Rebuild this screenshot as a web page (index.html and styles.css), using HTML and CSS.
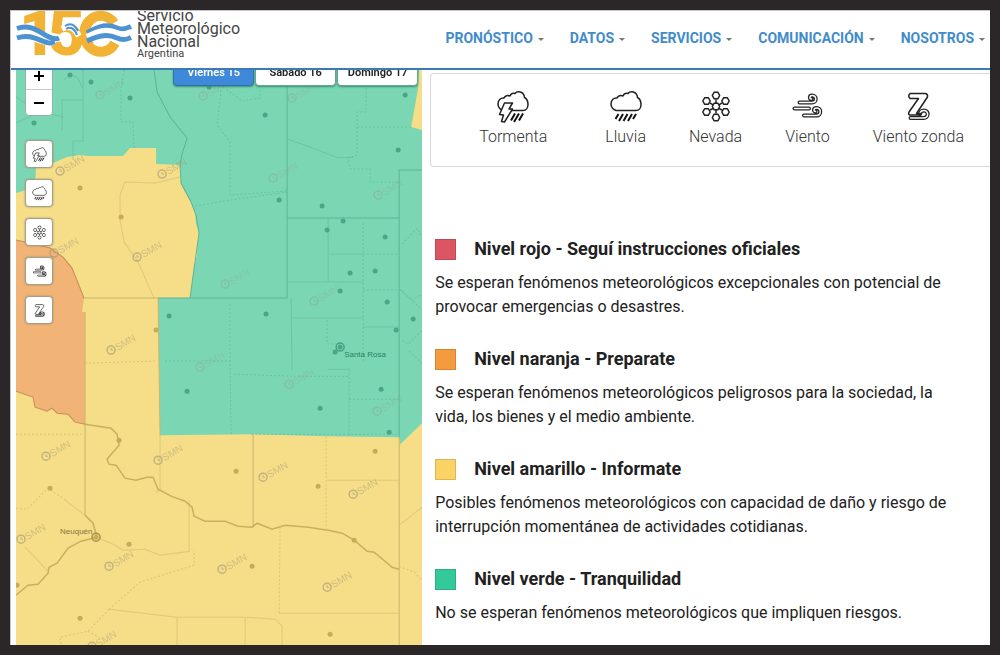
FILE: index.html
```html
<!DOCTYPE html>
<html lang="es">
<head>
<meta charset="utf-8">
<title>Servicio Meteorológico Nacional - Alertas</title>
<link rel="stylesheet" href="styles.css">
</head>
<body>
<svg class="defs" aria-hidden="true">
  <defs>
    <symbol id="storm" viewBox="0 0 32 33">
      <path class="ln" d="M6 20.500C2 19 1 16.500 1 14 1 10 4 7.500 7 8 8 5.500 11 5 13 6 14 3.500 16 3 18 3.500 20 .5 27 1 27.500 7.500 30 9 31 12 31 14.500 31 18 29 20.500 26 20.500Z"/>
      <path class="ln solid" d="M7.500 13H15.500L12 19H15.500L7.500 32 4.500 31.500 6.500 25 2.500 24.500Z"/>
      <path class="rain" d="M18 23.500L14 30.500M22 23.500L17 32M26 23.500L22 30.500"/>
    </symbol>
    <symbol id="rain" viewBox="0 0 32 33">
      <path class="ln" d="M6 20.500C2 19 1 16.500 1 14 1 10 4 7.500 7 8 8 5.500 11 5 13 6 14 3.500 16 3 18 3.500 20 .5 27 1 27.500 7.500 30 9 31 12 31 14.500 31 18 29 20.500 26 20.500Z"/>
      <path class="rain" d="M8.500 24L5.500 29M13 24L9 31M17.500 24L13.500 31M22 24L18 31M26 24L23 29"/>
    </symbol>
    <symbol id="snow" viewBox="0 0 32 33">
      <path class="ln" d="M16 9.500V13M16 20V23.500M10 13L13 14.800M19 18.500L22 20M22 13L19 14.800M13 18.500L10 20"/>
      <g class="ln">
        <path id="hex" d="M14.200 13.200H17.800L19.700 16.500 17.800 19.800H14.200L12.300 16.500Z"/>
        <use href="#hex" y="-11"/><use href="#hex" y="11"/>
        <use href="#hex" x="-9.500" y="-5.500"/><use href="#hex" x="9.500" y="-5.500"/>
        <use href="#hex" x="-9.500" y="5.500"/><use href="#hex" x="9.500" y="5.500"/>
      </g>
    </symbol>
    <symbol id="wind" viewBox="0 0 32 33">
      <path class="tube" d="M8.500 12.500H21C26 12.500 26 5.500 21 5.500 18.500 5.500 18 8.500 20.500 9"/>
      <path class="core" d="M8.500 12.500H21C26 12.500 26 5.500 21 5.500 18.500 5.500 18 8.500 20.500 9"/>
      <path class="tube" d="M3.500 18.500H18"/><path class="core" d="M3.500 18.500H18"/>
      <path class="tube" d="M13 25.500H25.500C30.500 25.500 30.500 18 25.500 18 22.500 18 22 21 24.500 21.500"/>
      <path class="core" d="M13 25.500H25.500C30.500 25.500 30.500 18 25.500 18 22.500 18 22 21 24.500 21.500"/>
    </symbol>
    <symbol id="zonda" viewBox="0 0 32 33">
      <path class="tube" d="M8.500 28H21.500C27 28 27 20.500 22 20.500 19.500 20.500 18 22 18 24"/>
      <path class="core" d="M8.500 28H21.500C27 28 27 20.500 22 20.500 19.500 20.500 18 22 18 24"/>
      <path class="ln solid" d="M8 3.500H23.500Q26 4 25.500 7L14.500 23.500H18.500V25H7.500Q6 24 7 22L16.500 8.500H8Q5.500 6 8 3.500Z"/>
    </symbol>
    <g id="smn">
      <circle r="4" fill="none" stroke="currentColor" stroke-width="1.500"/>
      <path d="M0-2V0H2" fill="none" stroke="currentColor"/>
      <text class="stamp" transform="rotate(-30)" x="5" y="4">SMN</text>
    </g>
    <circle id="dot" r="2.500"/>
  </defs>
</svg>
<div class="page">
  <header class="header">
    <a class="brand" href="#" aria-label="Servicio Meteorológico Nacional Argentina">
      <svg class="brand-mark" viewBox="0 0 116 50" aria-hidden="true">
        <text class="digits" x="3 32" y="44">15</text>
        <path class="ring" d="M98 12A16.500 18 0 1 0 99 32"/>
        <path d="M72 20Q90 12 101 16 110 20 116 14V31Q104 36 94 29 84 26 72 33Z" fill="#fff"/>
        <path class="ring" d="M74 9A16.500 18 0 0 0 74 35"/>
        <path d="M1 14C14 11 22 18 31 23 36 26 40 26 43 25L39 34C22 36 14 25 1 30Z" fill="#fff"/>
        <path class="wave" d="M1 17.500C14 13 22 20 31 25 36 28 40 28.500 43 27"/>
        <path class="wave" d="M1 27C14 22.500 22 29 31 31.500 34 32.500 36 32 39 31"/>
        <path class="foam" d="M46 18Q56 12 63 25"/>
        <path class="thin" d="M49 15Q57 10 62 20"/>
        <path class="thin" d="M50 18Q57 14 61 24"/>
        <path class="wave" d="M71 22C84 14 92 13 101 17 108 20 112 17 115 15.500"/>
        <path class="foam" d="M71 26C84 19 92 18 101 22 108 25 112 22 115 21"/>
        <path class="wave" d="M71 30C84 24 92 23 101 27 108 30 112 28 115 26.500"/>
      </svg>
      <span class="brand-name">Servicio<br>Meteorológico<br>Nacional<small>Argentina</small></span>
    </a>
    <nav class="nav">
      <a href="#">PRONÓSTICO</a>
      <a href="#">DATOS</a>
      <a href="#">SERVICIOS</a>
      <a href="#">COMUNICACIÓN</a>
      <a href="#">NOSOTROS</a>
    </nav>
  </header>
  <main class="main">
    <section class="map" aria-label="Mapa de alertas">
      <svg class="map-canvas" viewBox="16 70 406 575" preserveAspectRatio="xMinYMin slice">
        <rect x="16" y="70" width="406" height="575" fill="#f6dd87"/>
        <path fill="#7bd7b3" d="M16 70H419L418 88 411 127 422 130V423L400 444 399 437 327 436 253 434 160 435 158 298H190L192 283 194 267 197 255 197 247 199 233 196 224 195 213 190 200 184 190 181 183 180 165 156 164V148H130L123 156 87 156 80 155 67 157 53 163 36 166 35 188 26 190 16 193Z"/>
        <path fill="#f1b376" d="M16 240L30 243 50 248 63 257 72 268 82 292 84 298 82 312H85V424L75 422 68 414 57 413 52 408 47 411 35 407 33 397 16 391Z"/>
        <g class="green-lines">
          <path d="M287 70V298H158M287 218H399M399 437V170H422"/>
          <path d="M154 70L157 92 170 117 187 138 182 154 180 165 181 183 191 202 196 215 199 233 197 247 192 283 190 298"/>
          <path class="faint" d="M16 97L25 103M16 123L40 112 64 117M62 131V100H82M83 70V141H73V160M64 80Q76 68 82 88M287 139L318 150 338 158 354 157M291 298L292 370M328 218V282M288 282H363M329 254H363M292 318H363M363 327H399M328 369H349"/>
          <path class="dots" d="M124 70L121 90V122H133L134 150M221 90L217 125 230 142V195L287 191M195 206L230 200 287 192M223 87L242 101 260 98V83M366 88V112H357V155L348 158 350 169H370V182H399M357 127H411M363 223V327M363 254H399M363 290H400L412 300 422 294M402 244L417 228 422 238M230 304V364L231 434M165 361H230M234 374L290 376H349M349 369V436M349 399H399M327 320V344H340M363 327V363M401 290L422 310M402 340L408 344 422 330M409 351L422 363M251 434H399"/>
        </g>
        <g class="land-lines">
          <path d="M84 298H158L160 435M85 312V515M253 434V527M399 437V645"/>
          <path class="faint" d="M125 182L120 195 120 220 124 242 137 260 154 298M125 182L155 183 180 177M160 435V490L156 492M189 500V550M85 515L65 500M25 547L48 571M109 609L177 617H245L275 619 282 626V645M177 617V645M245 617V645M279 613H399M327 480H399M399 525L422 507"/>
          <path class="dots" d="M85 363L155 361M16 434H85M326 436V530M280 527L279 613M109 609L140 582 194 565 194 550M109 609L88 631 60 637 61 645M88 631L100 638M16 508L27 509 48 488 66 500M399 566L414 572 422 580"/>
          <path class="river" d="M85 424L111 428 117 434 119 445 107 459 109 464 116 465 125 478 136 480 147 477 153 477 158 489 171 496 185 501 192 507 194 516 205 521 225 521 238 526 252 527 257 523 272 529 285 525 308 527 328 530 342 533 354 540 367 551 374 552 392 567 399 569"/>
          <path class="river" d="M85 515L93 523 97 537 81 541 68 548 57 563 49 567 48 573 38 584 28 585 16 595"/>
          <path class="faint" d="M97 537L115 545 123 550 145 549 160 555 190 551"/>
        </g>
        <path class="fire-line" d="M16 391L33 397 35 407 47 411 52 408 57 413 68 414 75 422 85 424M16 240L30 243 50 248 63 257 72 268 84 298"/>
        <g class="green-dots">
          <use href="#dot" x="70" y="75"/><use href="#dot" x="91" y="82"/><use href="#dot" x="130" y="98"/><use href="#dot" x="34" y="123"/><use href="#dot" x="209" y="87"/><use href="#dot" x="265" y="115"/><use href="#dot" x="405" y="95"/><use href="#dot" x="398" y="150"/><use href="#dot" x="279" y="200"/><use href="#dot" x="322" y="206"/><use href="#dot" x="343" y="221"/><use href="#dot" x="327" y="230"/><use href="#dot" x="385" y="237"/><use href="#dot" x="350" y="273"/><use href="#dot" x="375" y="271"/><use href="#dot" x="340" y="291"/><use href="#dot" x="387" y="302"/><use href="#dot" x="413" y="319"/><use href="#dot" x="396" y="330"/><use href="#dot" x="266" y="314"/><use href="#dot" x="169" y="316"/><use href="#dot" x="187" y="391"/><use href="#dot" x="320" y="408"/><use href="#dot" x="381" y="389"/><use href="#dot" x="389" y="432"/><use href="#dot" x="335" y="352"/>
          <circle class="city" cx="340" cy="347" r="4"/><use href="#dot" x="340" y="347"/>
          <text class="place" x="344" y="357">Santa Rosa</text>
        </g>
        <g class="land-dots">
          <use href="#dot" x="80" y="188"/><use href="#dot" x="121" y="217"/><use href="#dot" x="156" y="330"/><use href="#dot" x="119" y="440"/><use href="#dot" x="50" y="488"/><use href="#dot" x="236" y="471"/><use href="#dot" x="318" y="486"/><use href="#dot" x="375" y="451"/><use href="#dot" x="129" y="544"/><use href="#dot" x="252" y="566"/><use href="#dot" x="354" y="540"/><use href="#dot" x="80" y="618"/><use href="#dot" x="330" y="634"/><use href="#dot" x="17" y="585"/>
          <circle class="city" cx="96" cy="537" r="4"/><use href="#dot" x="96" y="537"/>
          <text class="place" x="60" y="534">Neuquén</text>
        </g>
        <g class="stamps pale">
          <use href="#smn" x="100" y="95"/><use href="#smn" x="203" y="96"/><use href="#smn" x="292" y="98"/><use href="#smn" x="273" y="178"/><use href="#smn" x="378" y="195"/><use href="#smn" x="225" y="284"/><use href="#smn" x="314" y="301"/><use href="#smn" x="200" y="367"/><use href="#smn" x="289" y="384"/><use href="#smn" x="377" y="411"/>
        </g>
        <g class="stamps">
          <use href="#smn" x="60" y="171"/><use href="#smn" x="162" y="174"/><use href="#smn" x="54" y="253"/><use href="#smn" x="137" y="257"/><use href="#smn" x="111" y="350"/><use href="#smn" x="46" y="456"/><use href="#smn" x="158" y="460"/><use href="#smn" x="263" y="477"/><use href="#smn" x="353" y="494"/><use href="#smn" x="21" y="539"/><use href="#smn" x="109" y="566"/><use href="#smn" x="222" y="569"/><use href="#smn" x="327" y="587"/><use href="#smn" x="92" y="646"/>
        </g>
      </svg>
      <div class="days">
        <button type="button" class="day active">Viernes 15</button>
        <button type="button" class="day">Sábado 16</button>
        <button type="button" class="day">Domingo 17</button>
      </div>
      <div class="tools">
        <div class="zoom">
          <button type="button" aria-label="Acercar"><svg viewBox="0 0 12 12"><path d="M6 1V11M1 6H11"/></svg></button>
          <button type="button" aria-label="Alejar"><svg viewBox="0 0 12 12"><path d="M1 6H11"/></svg></button>
        </div>
        <button type="button" class="tool" aria-label="Tormenta"><svg><use href="#storm"/></svg></button>
        <button type="button" class="tool" aria-label="Lluvia"><svg><use href="#rain"/></svg></button>
        <button type="button" class="tool" aria-label="Nevada"><svg><use href="#snow"/></svg></button>
        <button type="button" class="tool" aria-label="Viento"><svg><use href="#wind"/></svg></button>
        <button type="button" class="tool" aria-label="Viento zonda"><svg><use href="#zonda"/></svg></button>
      </div>
    </section>
    <section class="info">
      <ul class="phenomena">
        <li class="lead"><svg><use href="#storm"/></svg>Tormenta</li>
        <li><svg><use href="#rain"/></svg>Lluvia</li>
        <li><svg><use href="#snow"/></svg>Nevada</li>
        <li><svg><use href="#wind"/></svg>Viento</li>
        <li><svg><use href="#zonda"/></svg>Viento zonda</li>
      </ul>
      <div class="levels">
        <article class="level red">
          <h2>Nivel rojo - Seguí instrucciones oficiales</h2>
          <p>Se esperan fenómenos meteorológicos excepcionales con potencial de provocar emergencias o desastres.</p>
        </article>
        <article class="level orange">
          <h2>Nivel naranja - Preparate</h2>
          <p>Se esperan fenómenos meteorológicos peligrosos para la sociedad, la vida, los bienes y el medio ambiente.</p>
        </article>
        <article class="level yellow">
          <h2>Nivel amarillo - Informate</h2>
          <p>Posibles fenómenos meteorológicos con capacidad de daño y riesgo de interrupción momentánea de actividades cotidianas.</p>
        </article>
        <article class="level green">
          <h2>Nivel verde - Tranquilidad</h2>
          <p>No se esperan fenómenos meteorológicos que impliquen riesgos.</p>
        </article>
      </div>
    </section>
  </main>
</div>
</body>
</html>
```
FILE: styles.css
```css
*, *::before { box-sizing: border-box; }
body {
  margin: 0;
  padding: 10px;
  background: #2b2728;
  color: #212121;
  font-family: Roboto, "Liberation Sans", sans-serif;
}
.defs { position: absolute; width: 0; height: 0; }
.page {
  display: flex;
  flex-direction: column;
  min-height: calc(100vh - 20px);
  background: #fff;
  border-left: 1px solid #c4c4c4;
}

/* Header */
.header {
  display: flex;
  justify-content: space-between;
  align-items: flex-start;
  height: 60px;
  padding: 0 5px;
  overflow: hidden;
  border-top: 1px solid #c4c4c4;
  border-bottom: 2px solid #3d7ab5;
}
.brand { display: flex; gap: 5px; color: #444; text-decoration: none; }
.brand-mark { width: 116px; height: 50px; }
.digits { font: 900 64px Roboto, sans-serif; fill: #f2b233; }
.ring { fill: none; stroke: #f2b233; stroke-width: 10; }
.wave, .foam, .thin { fill: none; stroke: #4d93d1; stroke-width: 5; }
.foam { stroke: #fff; stroke-width: 6; }
.thin { stroke-width: 2; }
.brand-name { margin-top: -2px; font-size: 16px; line-height: 13px; }
.brand-name small { display: block; font-size: 11px; line-height: 11px; }
.nav { display: flex; gap: 26px; padding-top: 18px; }
.nav a {
  display: flex;
  align-items: center;
  gap: 5px;
  color: #428bca;
  font-size: 14px;
  font-weight: 700;
  line-height: 18px;
  text-decoration: none;
}
.nav a::after {
  content: "";
  margin-top: 3px;
  border: 3px solid transparent;
  border-top-color: #777;
  border-bottom: 0;
}

/* Main columns */
.main { display: grid; grid-template-columns: 42fr 58fr; flex: 1; }
.map { position: relative; margin-left: 5px; overflow: hidden; }
.map-canvas { display: block; position: absolute; width: 100%; height: 100%; }
.green-lines path, .land-lines path, .fire-line { fill: none; stroke-width: 1; }
.green-lines { stroke: #5fb495; }
.land-lines { stroke: #c9b56d; }
.fire-line { stroke: #c98c58; }
.faint { opacity: .5; }
.dots { stroke-dasharray: 2 2; opacity: .6; }
.land-lines .river { stroke: #c7b060; stroke-width: 1.500; }
.green-dots { fill: #4ba687; }
.land-dots { fill: #c6ab58; }
.city { fill: none; stroke: #45a182; stroke-width: 1.500; }
.land-dots .city { stroke: #a8924c; }
.place { font: 8px "Liberation Sans", sans-serif; fill: #2f7f65; }
.land-dots .place { fill: #85743f; }
.stamps { color: #a0977a; opacity: .6; }
.stamps.pale { color: #8f9f90; opacity: .4; }
.stamp { font: 10px "Liberation Sans", sans-serif; fill: currentColor; opacity: .7; }

/* Map controls */
.days { position: absolute; top: -14px; right: 4px; display: flex; gap: 1px; }
.day {
  width: 81px;
  height: 30px;
  padding: 3px 0 0;
  border: 1px solid #62a88f;
  border-radius: 4px;
  background: #fff;
  color: #222;
  font: 600 11px/24px Roboto, sans-serif;
  box-shadow: 0 1px 2px #3f8f73;
}
.day.active { background: #3f89da; border-color: #2e6fb5; color: #fff; }
.tools { position: absolute; top: -8px; left: 9px; display: grid; gap: 11px; }
.zoom {
  display: grid;
  margin-bottom: 13px;
  border: 1px solid #8fb5a5;
  border-radius: 4px;
  background: #fff;
}
.zoom button {
  height: 26px;
  padding: 0;
  border: 0;
  background: none;
  line-height: 0;
}
.zoom button + button { border-top: 1px solid #ccc; }
.zoom svg { width: 12px; height: 12px; stroke: #000; stroke-width: 2; }
.tool {
  display: grid;
  place-items: center;
  width: 28px;
  height: 28px;
  padding: 0;
  border: 1px solid #a59f88;
  border-radius: 4px;
  background: #fff;
  box-shadow: 0 0 2px #8a8a78;
}
.tool svg { width: 15px; height: 15px; }

/* Icons */
.ln { fill: none; stroke: #222; stroke-width: 1.500; stroke-linejoin: round; }
.ln.solid { fill: #fff; }
.rain { fill: none; stroke: #111; stroke-width: 2; }
.tube, .core { fill: none; stroke-linecap: round; stroke-linejoin: round; }
.tube { stroke: #222; stroke-width: 4; }
.core { stroke: #fff; stroke-width: 1.500; }

/* Information column */
.info { padding: 3px 0 0 8px; }
.phenomena {
  display: flex;
  gap: 43px;
  height: 94px;
  margin: 0;
  padding: 16px 0 0 33px;
  border: 1px solid #d8d8d8;
  border-right: 0;
  border-radius: 4px 0 0 4px;
  list-style: none;
  color: #333;
  font-size: 16px;
  font-weight: 300;
  line-height: 24px;
}
.phenomena li {
  display: flex;
  flex-direction: column;
  align-items: center;
  gap: 2px;
  white-space: nowrap;
}
.phenomena .lead { padding: 0 15px; }
.phenomena svg { width: 32px; height: 33px; }
.levels { display: grid; gap: 28px; padding: 70px 30px 20px 5px; }
.level h2 {
  display: flex;
  align-items: center;
  gap: 18px;
  margin: 0 0 10px;
  font-size: 18px;
  font-weight: 700;
  line-height: 24px;
}
.level h2::before {
  content: "";
  width: 21px;
  height: 21px;
  border: 1px solid #0002;
  background: var(--level);
}
.level p { margin: 0; font-size: 16px; line-height: 24px; }
.red { --level: #dc5563; }
.orange { --level: #f49a3f; }
.yellow { --level: #fbd365; }
.green { --level: #34c999; }
```
